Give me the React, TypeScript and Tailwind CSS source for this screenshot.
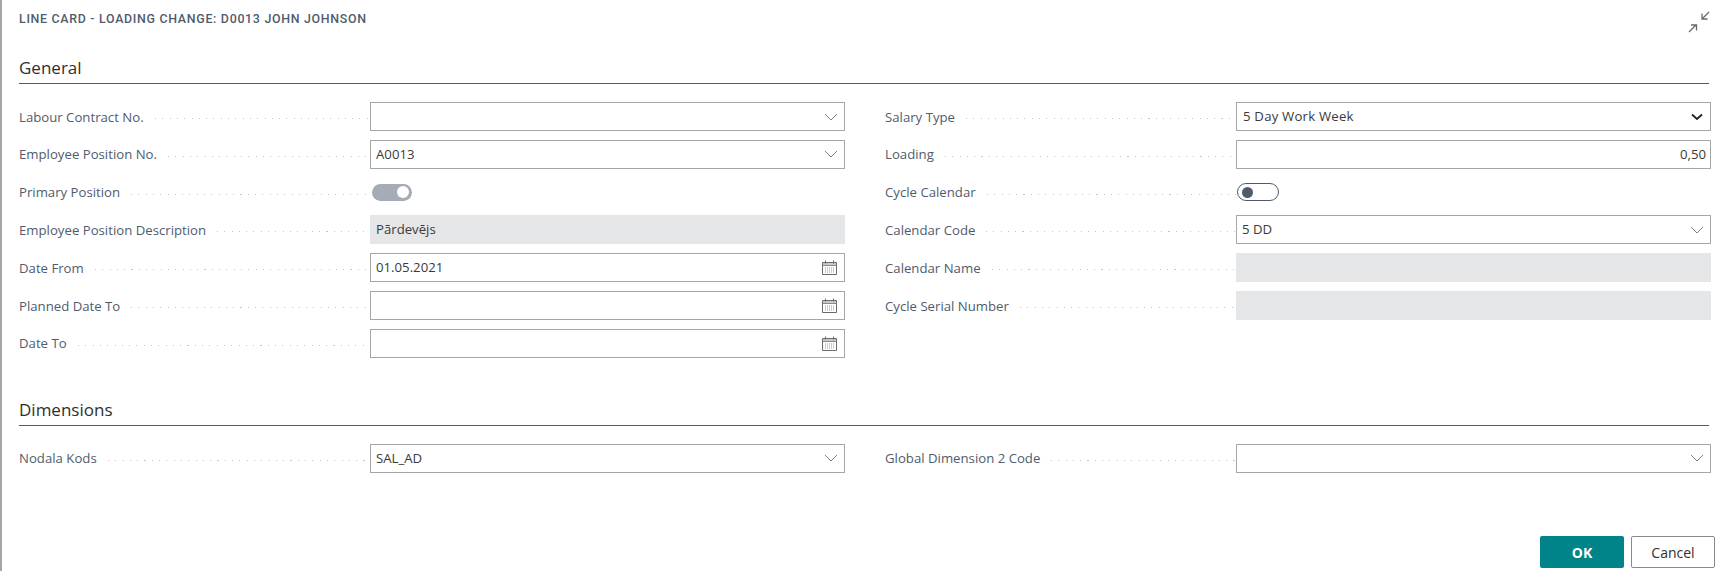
import type { ReactNode } from "react";

const FONT = "font-['Open_Sans','Noto_Sans',sans-serif]";

function Chevron({ bold }: { bold?: boolean }) {
  return (
    <svg width="14" height="8" viewBox="0 0 14 8" fill="none" className="shrink-0">
      <path
        d={bold ? "M2 1.500 7 6l5-4.500" : "M1 1l6 6 6-6"}
        stroke={bold ? "#1f2328" : "#6b7280"}
        strokeWidth={bold ? 1.8 : 0.9}
      />
    </svg>
  );
}

function CalendarIcon() {
  return (
    <svg width="15" height="15" viewBox="0 0 15 15" fill="none" className="mr-[1px] shrink-0">
      <path d="M.5 2.500h14v12H.5z" fill="#fff" stroke="#6a6a6a" />
      <path d="M1 3h13v2.500H1z" fill="#c9c9c9" />
      <path d="M.5 5.500h14" stroke="#8a8a8a" />
      <path d="M3.500.5v3M11.500.5v3" stroke="#6a6a6a" />
      <path d="M3 8h9M3 10h9M3 12h9" stroke="#9a9a9a" strokeDasharray="1 1" />
    </svg>
  );
}

function Box({ children, right, wide }: { children?: ReactNode; right?: ReactNode; wide?: boolean }) {
  return (
    <div className={`flex h-[29px] items-center justify-between border border-[#a6a6a6] bg-white pr-[6px] text-[13.2px] text-[#3a3a3a] ${wide ? "pl-[6px]" : "pl-[5px]"}`}>
      <span className={`pt-[1px] whitespace-nowrap ${wide ? "tracking-[0.2px]" : ""}`}>{children}</span>
      {right}
    </div>
  );
}

function Row({ label, children }: { label: string; children: ReactNode }) {
  return (
    <div className="flex h-[37.8px] items-start">
      <div className="flex h-[29px] w-[351px] shrink-0 items-center pt-[2px] text-[13.2px] text-[#505c6e]">
        <span className="shrink-0 pr-[11px]">{label}</span>
        <span className="mt-[2px] h-px flex-1 bg-[repeating-linear-gradient(to_right,#c4c4c4_0,#c4c4c4_1px,transparent_1px,transparent_7.3px)]" />
      </div>
      <div className="flex-1">{children}</div>
    </div>
  );
}

function Lookup({ value }: { value?: string }) {
  return <Box right={<Chevron />}>{value}</Box>;
}

function DateField({ value }: { value?: string }) {
  return <Box right={<CalendarIcon />}>{value}</Box>;
}

function ReadOnly({ value }: { value?: string }) {
  return (
    <div className="flex h-[29px] items-center bg-[#e5e6e8] pt-[1px] pl-[6px] text-[13.2px] text-[#3a3a3a]">
      {value}
    </div>
  );
}

function Toggle({ on }: { on: boolean }) {
  if (on) {
    return (
      <div className="flex h-[29px] items-center pl-[2px]">
        <div className="flex h-[17px] w-[40px] items-center justify-end rounded-full bg-[#a6acb6] pr-[3px]">
          <div className="h-[12px] w-[12px] rounded-full bg-white" />
        </div>
      </div>
    );
  }
  return (
    <div className="flex h-[29px] items-center pl-[1px]">
      <div className="flex h-[18px] w-[42px] items-center rounded-full border border-[#505c6e] bg-white pl-[4px]">
        <div className="h-[11px] w-[11px] rounded-full bg-[#505c6e]" />
      </div>
    </div>
  );
}

function Section({ title, children }: { title: string; children: ReactNode }) {
  return (
    <section>
      <h2 className="mr-[2px] h-[32px] border-b border-[#505c6e] text-[17px] leading-[32px] font-medium text-[#2f2f2f]">
        {title}
      </h2>
      <div className="mt-[18px] grid grid-cols-[826px_826px] gap-x-[40px]">{children}</div>
    </section>
  );
}

export default function App() {
  return (
    <div className={`flex h-[571px] flex-col border-l-2 border-[#a6a6a6] bg-white pl-[17px] pr-[13px] ${FONT}`}>
      <div className="flex h-[52px] items-start justify-between">
        <h1 className="mt-[11px] font-['Roboto',sans-serif] text-[12.4px] leading-[16px] font-medium tracking-[0.7px] text-[#505c6e] uppercase">
          Line Card - Loading Change: D0013 John Johnson
        </h1>
        <svg width="22" height="22" viewBox="0 0 22 22" fill="none" className="mt-[11px] mr-[1px]" stroke="#6b6b6b" strokeWidth="1.3">
          <path d="M1 21l7-7M3 14h5.500v5.500" />
          <path d="M21 1l-7 7M14 2.500V8h5.500" />
        </svg>
      </div>

      <Section title="General">
        <div>
          <Row label="Labour Contract No."><Lookup /></Row>
          <Row label="Employee Position No."><Lookup value="A0013" /></Row>
          <Row label="Primary Position"><Toggle on /></Row>
          <Row label="Employee Position Description"><ReadOnly value="Pārdevējs" /></Row>
          <Row label="Date From"><DateField value="01.05.2021" /></Row>
          <Row label="Planned Date To"><DateField /></Row>
          <Row label="Date To"><DateField /></Row>
        </div>
        <div>
          <Row label="Salary Type"><Box wide right={<Chevron bold />}>5 Day Work Week</Box></Row>
          <Row label="Loading">
            <div className="flex h-[29px] items-center justify-end border border-[#a6a6a6] pt-[1px] pr-[4px] text-[13.2px] text-[#3a3a3a]">0,50</div>
          </Row>
          <Row label="Cycle Calendar"><Toggle on={false} /></Row>
          <Row label="Calendar Code"><Lookup value="5 DD" /></Row>
          <Row label="Calendar Name"><ReadOnly /></Row>
          <Row label="Cycle Serial Number"><ReadOnly /></Row>
        </div>
      </Section>

      <div className="mt-[27px]">
        <Section title="Dimensions">
          <Row label="Nodala Kods"><Lookup value="SAL_AD" /></Row>
          <Row label="Global Dimension 2 Code"><Lookup /></Row>
        </Section>
      </div>

      <div className="mt-auto mb-[3px] flex justify-end gap-[7px]">
        <button type="button" className="ml-[1px] h-[32px] w-[84px] rounded-[2px] bg-[#008489] text-[14px] font-bold text-white">OK</button>
        <button type="button" className="mr-[-4px] h-[32px] w-[84px] rounded-[2px] border border-[#8a8a8a] bg-white text-[14px] text-[#2f2f2f]">Cancel</button>
      </div>
    </div>
  );
}
